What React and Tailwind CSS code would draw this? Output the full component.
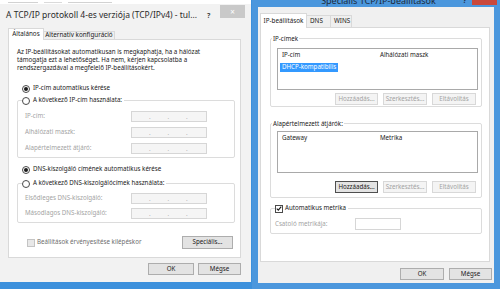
import React from 'react'

function Radio({ on }) {
  return (
    <span className="w-[8px] h-[8px] rounded-full border border-[#4a4a4a] bg-white flex items-center justify-center shrink-0">
      {on && <span className="w-[4px] h-[4px] rounded-full bg-[#1a1a1a]" />}
    </span>
  )
}

function Check({ on, disabled }) {
  return (
    <span className={`w-[8px] h-[8px] border flex items-center justify-center shrink-0 ${disabled ? 'border-[#c4c4c4] bg-[#e8e8e8]' : 'border-[#4a4a4a] bg-white'}`}>
      {on && (
        <svg width="7" height="7" viewBox="0 0 8 8">
          <path d="M1 4.2 L3.1 6.3 L7 1.4" fill="none" stroke="#1a1a1a" strokeWidth="1.5" />
        </svg>
      )}
    </span>
  )
}

function Btn({ w, children, disabled, focus }) {
  return (
    <div className={`${w} h-[12px] flex items-center justify-center border text-[6.2px] leading-none ${
      disabled ? 'border-[#d8d8d8] bg-[#f4f4f4] text-[#a3a3a3]' :
      focus ? 'border-[#4f4f4f] bg-[#e3e3e3] text-[#1a1a1a]' :
      'border-[#adadad] bg-[#e3e3e3] text-[#1a1a1a]'
    }`}>{children}</div>
  )
}

function IpBox() {
  return (
    <div className="w-[76px] h-[11px] border border-[#d6d6d6] bg-[#f5f5f5] grid grid-cols-4">
      {[0, 1, 2].map(i => (
        <div key={i} className="flex items-center justify-end text-[6px] leading-none text-[#9a9a9a]">.</div>
      ))}
      <div />
    </div>
  )
}

function IpRow({ label }) {
  return (
    <div className="flex items-center h-[11px] pl-[7px]">
      <span className="w-[106px] text-[6.2px] text-[#a3a3a3] leading-none">{label}</span>
      <IpBox />
    </div>
  )
}

function LeftDialog() {
  return (
    <div className="w-[252px] flex flex-col">
      <div className="h-[4px] w-[251px] bg-white flex items-start gap-[6px] pl-[8px]">
        <div className="w-[30px] h-px mt-[2px] bg-[#d2d2d2]" />
        <div className="w-[18px] h-px mt-[2px] bg-[#dadada]" />
        <div className="w-[44px] h-px mt-[2px] bg-[#d2d2d2]" />
      </div>
      <div className="w-[251px] h-[278px] bg-[#f2f2f2] flex flex-col">
        <div className="h-[24px] flex items-start">
          <div className="flex-1 pl-[6px] pt-[6px] text-[8.5px] leading-[10px] text-[#2b2b2b] whitespace-nowrap">A TCP/IP protokoll 4-es verziója (TCP/IPv4) - tul...</div>
          <div className="mt-[8px] w-[6px] text-[7px] leading-none font-bold text-[#444]">?</div>
          <div className="mt-[1px] ml-[7px] mr-[6px] w-[25px] h-[13px] bg-[#c9c9c9] flex items-center justify-center text-white text-[8px] leading-none">×</div>
        </div>
        <div className="pl-[8px] w-[241px] flex flex-col">
          <div className="flex items-end h-[12px] -mb-px relative z-10 text-[6.3px] leading-none text-[#1a1a1a]">
            <div className="w-[36px] h-[12px] bg-white border border-b-0 border-[#d9d9d9] flex items-center justify-center">Általános</div>
            <div className="w-[71px] h-[8px] mb-px bg-[#efefef] border border-b-0 border-l-0 border-[#d9d9d9] flex items-center justify-center">Alternatív konfiguráció</div>
          </div>
          <div className="w-[233px] h-[219px] bg-white border border-[#d9d9d9] flex flex-col text-[6.2px] text-[#1a1a1a]">
            <p className="mt-[8px] ml-[8px] leading-[8px] whitespace-nowrap">
              Az IP-beállításokat automatikusan is megkaphatja, ha a hálózat<br />
              támogatja ezt a lehetőséget. Ha nem, kérjen kapcsolatba a<br />
              rendszergazdával a megfelelő IP-beállításokért.
            </p>
            <div className="mt-[12px] ml-[13px] h-[9px] flex items-center gap-[3px] leading-none">
              <Radio on />
              <span>IP-cím automatikus kérése</span>
            </div>
            <fieldset className="mt-[3px] ml-[8px] w-[218px] border border-[#dcdcdc] rounded-[2px] pb-[3px]">
              <legend className="ml-[4px] pr-[2px]">
                <div className="h-[9px] flex items-center gap-[3px] leading-none"><Radio /><span>A következő IP-cím használata:</span></div>
              </legend>
              <div className="pt-[6px] flex flex-col gap-[5px]">
                <IpRow label="IP-cím:" />
                <IpRow label="Alhálózati maszk:" />
                <IpRow label="Alapértelmezett átjáró:" />
              </div>
            </fieldset>
            <div className="mt-[7px] ml-[13px] h-[9px] flex items-center gap-[3px] leading-none">
              <Radio on />
              <span>DNS-kiszolgáló címének automatikus kérése</span>
            </div>
            <fieldset className="mt-[5px] ml-[8px] w-[218px] border border-[#dcdcdc] rounded-[2px] pb-[3px]">
              <legend className="ml-[4px] pr-[2px]">
                <div className="h-[9px] flex items-center gap-[3px] leading-none"><Radio /><span>A következő DNS-kiszolgálócímek használata:</span></div>
              </legend>
              <div className="pt-[5px] flex flex-col gap-[4px]">
                <IpRow label="Elsődleges DNS-kiszolgáló:" />
                <IpRow label="Másodlagos DNS-kiszolgáló:" />
              </div>
            </fieldset>
            <div className="mt-[13px] ml-[18px] mr-[7px] h-[13px] flex items-center justify-between">
              <div className="flex items-center gap-[2px] leading-none">
                <Check disabled />
                <span className="text-[#6e6e6e]">Beállítások érvényesítése kilépéskor</span>
              </div>
              <div className="w-[51px] h-[13px] flex items-center justify-center border border-[#adadad] bg-[#e3e3e3] leading-none">Speciális...</div>
            </div>
          </div>
          <div className="mt-[5px] flex justify-end gap-[4px]">
            <Btn w="w-[46px]">OK</Btn>
            <Btn w="w-[43px]">Mégse</Btn>
          </div>
        </div>
      </div>
    </div>
  )
}

function ListBox({ cols, selected }) {
  return (
    <div className="ml-[6px] w-[201px] h-[42px] bg-white border border-[#a9a9a9] flex flex-col text-[6.2px] leading-none text-[#1a1a1a]">
      <div className="h-[13px] flex items-center pl-[4px]">
        <span className="w-[98px]">{cols[0]}</span>
        <span>{cols[1]}</span>
      </div>
      {selected && (
        <div className="mt-px ml-[2px] w-[58px] h-[9px] bg-[#3399ff] text-white flex items-center pl-[2px]">{selected}</div>
      )}
    </div>
  )
}

function RightDialog() {
  return (
    <div className="w-[248px] h-[289px] bg-[#4b97dd] flex flex-col">
      <div className="h-[7px] flex items-start overflow-hidden">
        <div className="w-[42px]" />
        <div className="flex-1 flex justify-center">
          <span className="-mt-[4px] text-[9px] leading-[10px] text-[#1c2a3a] whitespace-nowrap">Speciális TCP/IP-beállítások</span>
        </div>
        <div className="w-[6px] -mt-[3px] text-[7px] leading-[8px] font-bold text-[#1c2a3a]">?</div>
        <div className="ml-[3px] mr-[3px] w-[25px] h-[5px] bg-[#c9483b]" />
      </div>
      <div className="ml-[6px] w-[236px] h-[276px] bg-[#f0f0f0] flex flex-col pl-[2px] pt-[6px]">
        <div className="flex items-end h-[15px] -mb-px relative z-10 text-[6.3px] leading-none text-[#1a1a1a]">
          <div className="w-[47px] h-[15px] bg-white border border-b-0 border-[#d9d9d9] flex items-center justify-center">IP-beállítások</div>
          <div className="w-[24px] h-[12px] mb-px bg-[#efefef] border border-b-0 border-l-0 border-[#d9d9d9] flex items-center pl-[3px]">DNS</div>
          <div className="w-[21px] h-[12px] mb-px bg-[#efefef] border border-b-0 border-l-0 border-[#d9d9d9] flex items-center pl-[3px]">WINS</div>
        </div>
        <div className="w-[230px] h-[235px] bg-white border border-[#d9d9d9] flex flex-col text-[6.2px] text-[#1a1a1a]">
          <fieldset className="mt-[6px] ml-[9px] w-[212px] border border-[#dcdcdc] rounded-[2px] pb-px">
            <legend className="ml-px px-px h-[9px] leading-[9px]">IP-címek</legend>
            <div className="mt-[5px]">
              <ListBox cols={['IP-cím', 'Alhálózati maszk']} selected="DHCP-kompatibilis" />
            </div>
            <div className="mt-[3px] pr-[5px] flex justify-end gap-[5px]">
              <Btn w="w-[43px]" disabled>Hozzáadás...</Btn>
              <Btn w="w-[44px]" disabled>Szerkesztés...</Btn>
              <Btn w="w-[44px]" disabled>Eltávolítás</Btn>
            </div>
          </fieldset>
          <fieldset className="mt-[12px] ml-[9px] w-[212px] border border-[#dcdcdc] rounded-[2px] pb-[4px]">
            <legend className="ml-px px-px h-[9px] leading-[9px]">Alapértelmezett átjárók:</legend>
            <div className="mt-[3px]">
              <ListBox cols={['Gateway', 'Metrika']} />
            </div>
            <div className="mt-[8px] pr-[5px] flex justify-end gap-[5px]">
              <Btn w="w-[43px]" focus>Hozzáadás...</Btn>
              <Btn w="w-[44px]" disabled>Szerkesztés...</Btn>
              <Btn w="w-[44px]" disabled>Eltávolítás</Btn>
            </div>
          </fieldset>
          <fieldset className="mt-[6px] ml-[9px] w-[212px] border border-[#dcdcdc] rounded-[2px] pb-[3px]">
            <legend className="ml-[4px] pr-[2px]">
              <div className="h-[9px] flex items-center gap-[2px] leading-none"><Check on /><span>Automatikus metrika</span></div>
            </legend>
            <div className="pt-[5px] pl-[4px] h-[17px] flex items-center">
              <span className="w-[80px] text-[#a3a3a3] leading-none">Csatoló metrikája:</span>
              <div className="w-[46px] h-[12px] border border-[#d6d6d6] bg-white" />
            </div>
          </fieldset>
        </div>
        <div className="mt-[6px] pr-[2px] flex justify-end gap-[5px]">
          <Btn w="w-[44px]">OK</Btn>
          <Btn w="w-[43px]">Mégse</Btn>
        </div>
      </div>
    </div>
  )
}

export default function App() {
  return (
    <div className="w-[500px] h-[289px] flex bg-[#3c90dc] overflow-hidden font-['Noto_Sans',sans-serif]">
      <LeftDialog />
      <RightDialog />
    </div>
  )
}
